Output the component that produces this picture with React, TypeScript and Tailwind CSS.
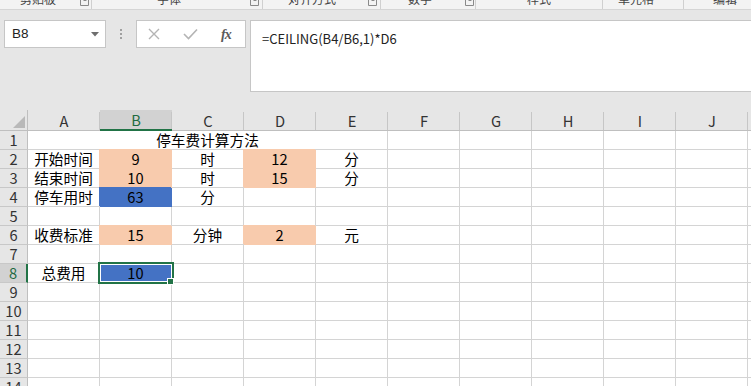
import React from 'react';

const COLS = ['A', 'B', 'C', 'D', 'E', 'F', 'G', 'H', 'I', 'J'];

type Fill = 'peach' | 'blue';
interface Cell {
  v?: string;
  fill?: Fill;
}

const sheet: Record<number, Record<string, Cell>> = {
  2: { A: { v: '开始时间' }, B: { v: '9', fill: 'peach' }, C: { v: '时' }, D: { v: '12', fill: 'peach' }, E: { v: '分' } },
  3: { A: { v: '结束时间' }, B: { v: '10', fill: 'peach' }, C: { v: '时' }, D: { v: '15', fill: 'peach' }, E: { v: '分' } },
  4: { A: { v: '停车用时' }, B: { v: '63', fill: 'blue' }, C: { v: '分' } },
  6: { A: { v: '收费标准' }, B: { v: '15', fill: 'peach' }, C: { v: '分钟' }, D: { v: '2', fill: 'peach' }, E: { v: '元' } },
  8: { A: { v: '总费用' }, B: { v: '10', fill: 'blue' } },
};

const fillClass = (fill?: Fill) => {
  switch (fill) {
    case 'peach': return 'bg-[#f8cbad] border-[#f8cbad] shadow-[-1px_-1px_0_0_#f8cbad]';
    case 'blue': return 'bg-[#4472c4] border-[#4472c4] shadow-[-1px_-1px_0_0_#4472c4]';
    default: return 'bg-white border-[#d4d4d4]';
  }
};

const Launcher = () => (
  <svg width="9" height="9" viewBox="0 0 9 9" className="block">
    <path d="M0.5 0 V8.5 H8.5 V0" fill="none" stroke="#8a8a8a" strokeWidth="1" />
    <path d="M2.5 0 L6 3.5 M3.5 3.5 H6 V1" fill="none" stroke="#8a8a8a" strokeWidth="1" />
  </svg>
);

const groups = [
  { label: '剪贴板', w: 'w-[92px]', pl: 'pl-[20px]', launch: 'left-[80px]' },
  { label: '字体', w: 'w-[171px]', pl: 'pl-[65px]', launch: 'left-[158px]' },
  { label: '对齐方式', w: 'w-[118px]', pl: 'pl-[25px]', launch: 'left-[105px]' },
  { label: '数字', w: 'w-[95px]', pl: 'pl-[27px]', launch: 'left-[84px]' },
  { label: '样式', w: 'w-[127px]', pl: 'pl-[51px]', launch: '' },
  { label: '单元格', w: 'w-[81px]', pl: 'pl-[15px]', launch: '' },
  { label: '编辑', w: 'flex-1', pl: 'pl-[29px]', launch: '' },
];

const App: React.FC = () => {
  const rows = Array.from({ length: 14 }, (_, i) => i + 1);

  return (
    <div className="w-[751px] h-[386px] overflow-hidden bg-[#e6e6e6] font-['Noto_Sans_CJK_SC',sans-serif] text-black select-none">
      {/* Ribbon group labels, cut off at top */}
      <div className="h-[10px] flex bg-[#f3f3f3] border-b border-[#d5d5d5] overflow-hidden">
        {groups.map((g, i) => (
          <div
            key={g.label}
            className={`relative h-full ${g.w} ${g.pl} ${i < groups.length - 1 ? 'border-r border-[#d0d0d0]' : ''}`}
          >
            <span className="block text-[12px] leading-[12px] text-[#444] mt-[-7px] whitespace-nowrap">{g.label}</span>
            {g.launch && (
              <div className={`absolute top-[-3px] ${g.launch}`}>
                <Launcher />
              </div>
            )}
          </div>
        ))}
      </div>

      {/* Name box + formula bar */}
      <div className="flex items-start pt-[10px] h-[92px]">
        <div className="ml-[4px] w-[102px] h-[28px] bg-white border border-[#c6c6c6] flex items-center justify-between pl-[7px] pr-[6px]">
          <span className="text-[13.5px] text-[#222] font-['Liberation_Sans',sans-serif]">B8</span>
          <svg width="8" height="5" viewBox="0 0 8 5"><path d="M0 0 H8 L4 4.5 Z" fill="#6e6e6e" /></svg>
        </div>
        <div className="w-[30px] h-[28px] flex flex-col items-center justify-center gap-[2px]">
          <span className="w-[2px] h-[2px] bg-[#a0a0a0]" />
          <span className="w-[2px] h-[2px] bg-[#a0a0a0]" />
          <span className="w-[2px] h-[2px] bg-[#a0a0a0]" />
        </div>
        <div className="w-[110px] h-[28px] bg-white border border-[#c6c6c6] flex items-center">
          <svg width="12" height="12" viewBox="0 0 12 12" className="ml-[11px]">
            <path d="M1 1 L11 11 M11 1 L1 11" stroke="#b4b4b4" strokeWidth="1.4" />
          </svg>
          <svg width="15" height="12" viewBox="0 0 15 12" className="ml-[23px]">
            <path d="M1 6 L5.5 10.5 L14 1.5" stroke="#b4b4b4" strokeWidth="1.6" fill="none" />
          </svg>
          <span className="ml-[23px] text-[14px] italic font-bold font-['Liberation_Serif',serif] text-[#5a5a5a] tracking-[-1px]">fx</span>
        </div>
        <div className="ml-[4px] flex-1 h-[72px] bg-white border-t border-b border-l border-[#c6c6c6] pl-[11px] pt-[4px]">
          <span className="text-[13px] leading-[20px] text-[#222]">=CEILING(B4/B6,1)*D6</span>
        </div>
      </div>

      {/* Sheet grid */}
      <div className="mt-[8px] grid grid-cols-[28px_repeat(10,72px)_1fr] text-[14.67px]">
        {/* header row */}
        <div className="h-[21px] border-b border-r border-[#bfbfbf] flex items-end justify-end pr-[2px] pb-[2px]">
          <svg width="12" height="12" viewBox="0 0 12 12"><path d="M12 0 V12 H0 Z" fill="#b9b9b9" /></svg>
        </div>
        {COLS.map((c) => (
          <div
            key={c}
            className={`h-[21px] flex items-end justify-center relative ${
              c === 'B' ? 'bg-[#d2d2d2] border-b-2 border-[#217346] text-[#1e6b42]' : 'border-b border-[#bfbfbf] text-[#333]'
            }`}
          >
            <span className="leading-[18px]">{c}</span>
            <span className="absolute right-0 top-[2px] bottom-0 w-px bg-[#c6c6c6]" />
          </div>
        ))}
        <div className="h-[21px] border-b border-[#bfbfbf]" />

        {rows.map((r) => (
          <React.Fragment key={r}>
            <div
              className={`h-[19px] flex items-end justify-center leading-[18px] border-b border-[#c8c8c8] ${
                r === 8 ? 'bg-[#d2d2d2] border-r-2 border-r-[#217346] text-[#1e6b42]' : 'border-r border-r-[#bfbfbf] text-[#333]'
              }`}
            >
              {r}
            </div>
            {r === 1 ? (
              <>
                <div className="col-span-5 h-[19px] bg-white border-b border-r border-[#d4d4d4] flex items-end justify-center leading-[18px]">
                  停车费计算方法
                </div>
                {COLS.slice(5).map((c) => (
                  <div key={c} className="h-[19px] bg-white border-b border-r border-[#d4d4d4]" />
                ))}
              </>
            ) : (
              COLS.map((c) => {
                const cell = sheet[r]?.[c];
                const selected = r === 8 && c === 'B';
                return (
                  <div
                    key={c}
                    className={`relative h-[19px] border-b border-r flex items-end justify-center leading-[18px] ${fillClass(cell?.fill)}`}
                  >
                    {cell?.v}
                    {selected && (
                      <>
                        <div className="absolute z-10 left-[-2px] top-[-2px] w-[76px] h-[22px] border-2 border-[#217346]">
                          <div className="w-full h-full border border-white" />
                        </div>
                        <div className="absolute z-20 left-[67px] top-[14px] w-[7px] h-[7px] bg-[#217346] border border-white" />
                      </>
                    )}
                  </div>
                );
              })
            )}
            <div className="h-[19px] bg-white border-b border-[#d4d4d4]" />
          </React.Fragment>
        ))}
      </div>
    </div>
  );
};

export default App;
